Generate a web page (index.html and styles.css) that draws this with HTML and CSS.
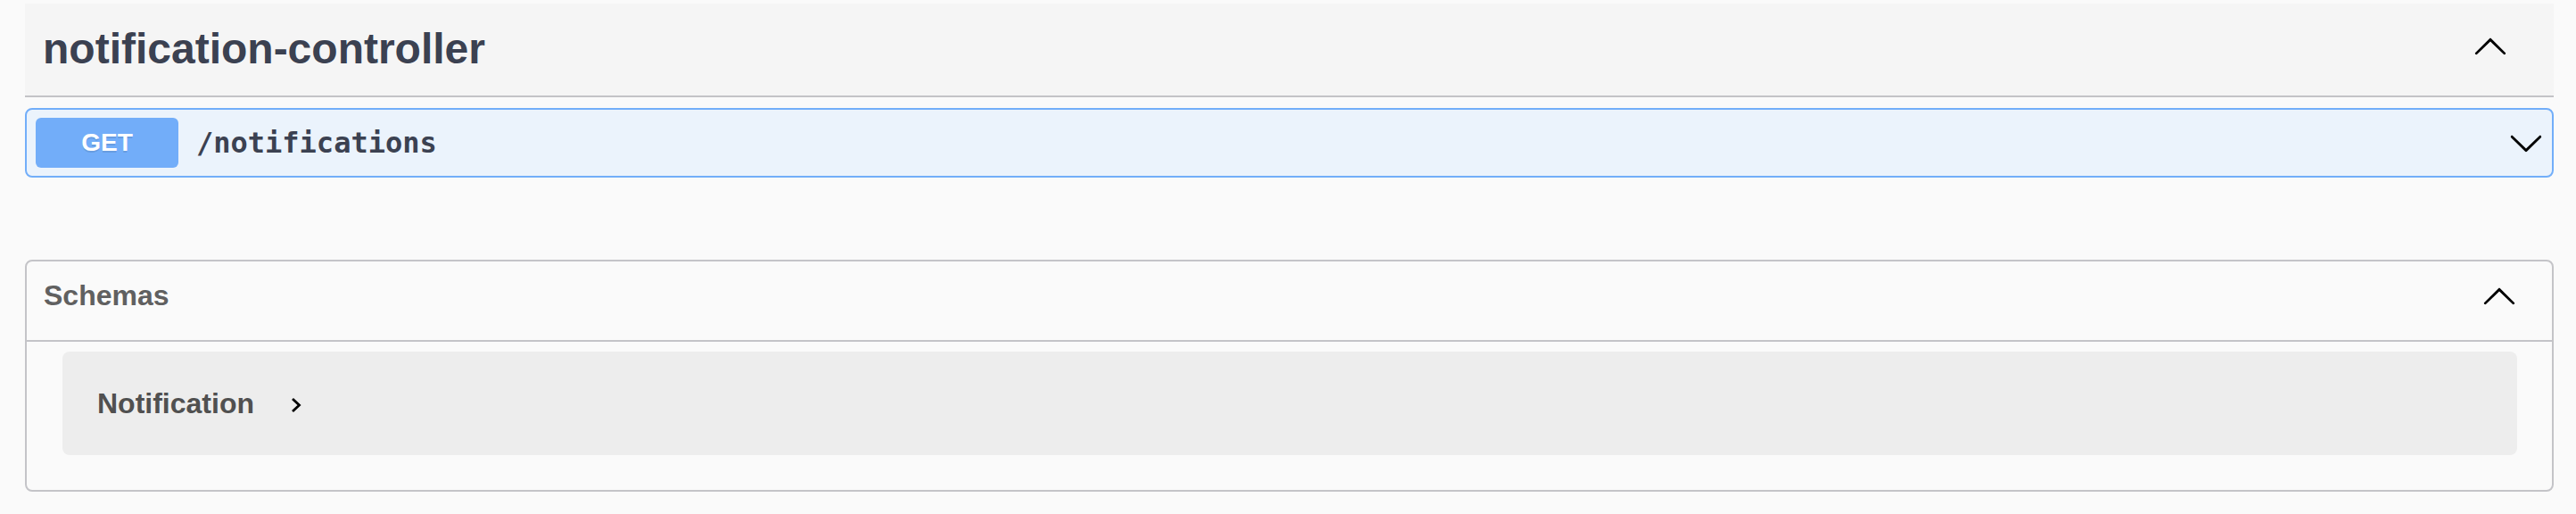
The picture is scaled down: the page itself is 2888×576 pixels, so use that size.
FILE: index.html
```html
<!DOCTYPE html>
<html>
<head>
<meta charset="utf-8">
<link rel="stylesheet" href="styles.css">
</head>
<body>
<div class="wrapper">
  <section class="tag-section">
    <div class="tag-header">
      <h3 class="tag-title">notification-controller</h3>
      <svg class="icon-arrow" viewBox="0 0 20 20" width="40" height="40"><path d="M17.418 14.908c.272.268.709.268.979 0s.271-.701 0-.969l-7.908-7.83c-.27-.268-.707-.268-.979 0l-7.908 7.830c-.27.268-.27.701 0 .969.271.268.709.268.979 0L10 7.767l7.418 7.141z"/></svg>
    </div>
    <div class="opblock">
      <span class="method">GET</span>
      <span class="path">/notifications</span>
      <svg class="icon-arrow op-arrow" viewBox="0 0 20 20" width="40" height="40"><path d="M17.418 6.109c.272-.268.709-.268.979 0s.271.701 0 .969l-7.908 7.83c-.27.268-.707.268-.979 0l-7.908-7.83c-.27-.268-.27-.701 0-.969.271-.268.709-.268.979 0L10 13.25l7.418-7.141z"/></svg>
    </div>
  </section>

  <section class="models">
    <div class="models-header">
      <h4 class="models-title">Schemas</h4>
      <svg class="icon-arrow" viewBox="0 0 20 20" width="40" height="40"><path d="M17.418 14.908c.272.268.709.268.979 0s.271-.701 0-.969l-7.908-7.83c-.27-.268-.707-.268-.979 0l-7.908 7.83c-.27.268-.27.701 0 .969.271.268.709.268.979 0L10 7.767l7.418 7.141z"/></svg>
    </div>
    <div class="model-box">
      <span class="model-name">Notification</span>
      <svg class="model-toggle" viewBox="0 0 12 18" width="12" height="18"><polyline points="2,2 9.5,9 2,16" fill="none" stroke="#000" stroke-width="2.8"/></svg>
    </div>
  </section>
</div>
</body>
</html>
```
FILE: styles.css
```css
html, body {
  margin: 0;
  padding: 0;
  background: #fafafa;
}

.wrapper {
  padding: 4px 25px 0 28px;
  font-family: "Liberation Sans", Arial, sans-serif;
}

.tag-section {
  display: flex;
  flex-direction: column;
}

.tag-header {
  display: flex;
  align-items: flex-start;
  justify-content: space-between;
  background: #f5f5f5;
  padding: 23px 51px 24px 20px;
  border-bottom: 2px solid #c3c3c7;
}

.tag-title {
  margin: 0;
  font-size: 48px;
  line-height: 56px;
  font-weight: 700;
  color: #3b4151;
}

.icon-arrow {
  flex: none;
  margin-top: 4px;
  fill: #000;
}

.opblock {
  display: flex;
  align-items: center;
  margin-top: 12px;
  height: 74px;
  padding: 0 9px 0 10px;
  background: #ebf3fc;
  border: 2px solid #72aef9;
  border-radius: 8px;
}

.method {
  flex: none;
  width: 160px;
  height: 56px;
  display: flex;
  align-items: center;
  justify-content: center;
  background: #72adf9;
  border-radius: 6px;
  color: #fff;
  font-size: 28px;
  font-weight: 700;
  text-shadow: 0 2px 0 rgba(0, 0, 0, 0.1);
}

.path {
  margin-left: 20px;
  font-family: "DejaVu Sans Mono", monospace;
  font-size: 32px;
  font-weight: 700;
  color: #3b4151;
  flex: 1;
}

.opblock .op-arrow {
  margin-top: 0;
}

.models {
  margin-top: 92px;
  border: 2px solid #c4c4c8;
  border-radius: 8px;
  padding-bottom: 39px;
}

.models-header {
  display: flex;
  align-items: flex-start;
  justify-content: space-between;
  padding: 18px 39px 30px 19px;
  border-bottom: 2px solid #c4c4c8;
}

.models-header .icon-arrow {
  margin-top: 0;
}

.models-title {
  margin: 0;
  font-size: 32px;
  line-height: 40px;
  font-weight: 700;
  color: #606060;
}

.model-box {
  display: flex;
  align-items: center;
  margin: 11px 39px 0 40px;
  height: 116px;
  padding-left: 39px;
  background: #ededed;
  border-radius: 8px;
}

.model-name {
  font-size: 32px;
  line-height: 40px;
  font-weight: 700;
  color: #505050;
}

.model-toggle {
  margin-left: 41px;
  margin-top: 4px;
}
```
